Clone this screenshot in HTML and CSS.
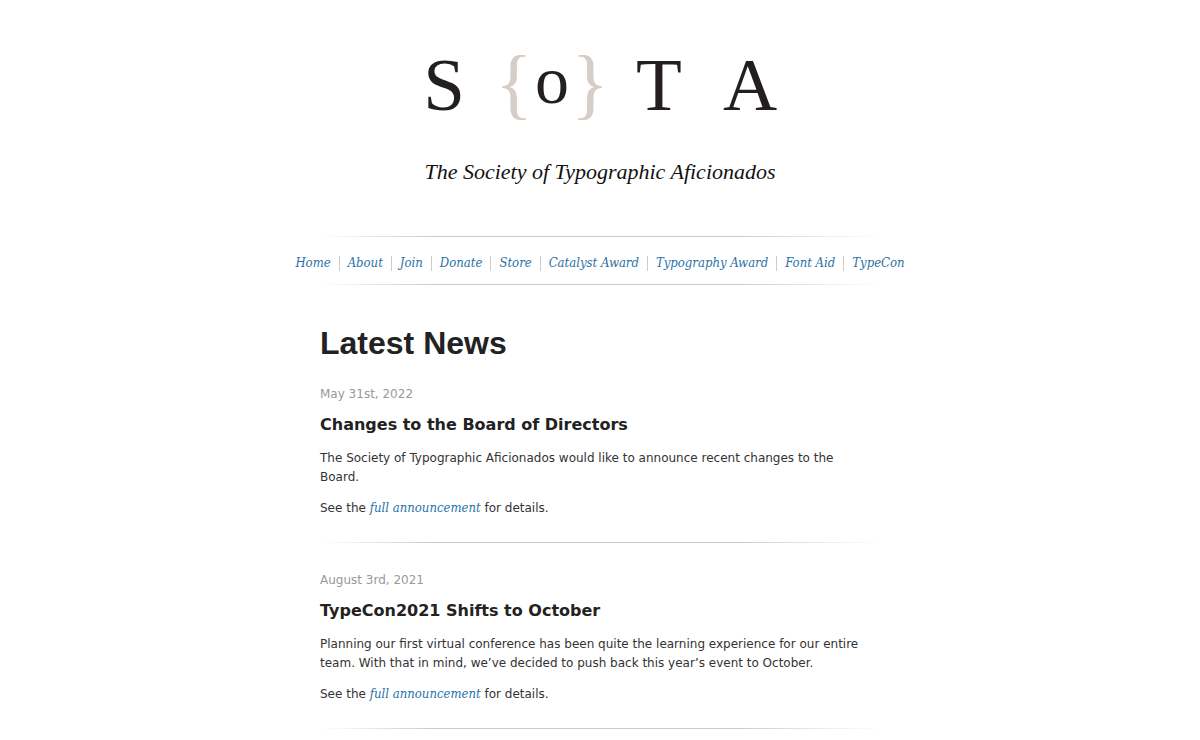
FILE: index.html
```html
<!DOCTYPE html>
<html lang="en">
<head>
<meta charset="utf-8">
<title>The Society of Typographic Aficionados</title>
<link rel="stylesheet" href="styles.css">
</head>
<body>
<header class="masthead">
  <svg class="logo" viewBox="0 0 400 150" width="400" height="150" role="img" aria-label="SoTA, The Society of Typographic Aficionados">
    <g class="logo-letters" text-anchor="middle">
      <text x="44" y="70">S</text>
      <text class="logo-brace" x="114" y="70">{</text>
      <text class="logo-o" x="152" y="63">o</text>
      <text class="logo-brace" x="190" y="70">}</text>
      <text x="259" y="70">T</text>
      <text x="350" y="70">A</text>
    </g>
    <text class="logo-tagline" x="200" y="139" text-anchor="middle">The Society of Typographic Aficionados</text>
  </svg>
</header>
<nav class="nav" aria-label="Main">
  <ul class="nav-list">
    <li><a href="#">Home</a></li>
    <li><a href="#">About</a></li>
    <li><a href="#">Join</a></li>
    <li><a href="#">Donate</a></li>
    <li><a href="#">Store</a></li>
    <li><a href="#">Catalyst Award</a></li>
    <li><a href="#">Typography Award</a></li>
    <li><a href="#">Font Aid</a></li>
    <li><a href="#">TypeCon</a></li>
  </ul>
</nav>
<main class="column">
  <h1 class="title">Latest News</h1>
  <article class="post">
    <p class="date">May 31st, 2022</p>
    <h2 class="post-title">Changes to the Board of Directors</h2>
    <p>The Society of Typographic Aficionados would like to announce recent changes to the Board.</p>
    <p>See the <a href="#">full announcement</a> for details.</p>
  </article>
  <article class="post">
    <p class="date">August 3rd, 2021</p>
    <h2 class="post-title">TypeCon2021 Shifts to October</h2>
    <p>Planning our first virtual conference has been quite the learning experience for our entire team. With that in mind, we’ve decided to push back this year’s event to October.</p>
    <p>See the <a href="#">full announcement</a> for details.</p>
  </article>
</main>
</body>
</html>
```
FILE: styles.css
```css
body {
  margin: 0;
  background: #fff;
  color: #333;
  font: 12px/19px Verdana, "DejaVu Sans", sans-serif;
}

a {
  color: #2a72a8;
  font-family: "DejaVu Serif Condensed", "DejaVu Serif", serif;
  font-size: 13px;
  font-style: italic;
  line-height: 18px;
  text-decoration: none;
}

a:hover {
  text-decoration: underline;
}

.masthead {
  display: flex;
  justify-content: center;
  padding: 40px 0 46px;
}

.logo {
  max-width: 100%;
}

.logo-letters {
  fill: #231f20;
  font-family: "Liberation Serif", serif;
  font-size: 75px;
}

.logo-letters .logo-o {
  font-size: 68px;
}

.logo-letters .logo-brace {
  fill: #d6cdc9;
  font-size: 78px;
}

.logo-tagline {
  fill: #111;
  font: italic 22px "Liberation Serif", serif;
}

.nav,
.post {
  background-image: linear-gradient(to right, #fff, #ccc 20%, #ccc 75%, #fff);
  background-position: bottom center;
  background-repeat: no-repeat;
  background-size: 560px 1px;
}

.nav {
  padding: 18px 0 13px;
  background-image:
    linear-gradient(to right, #fff, #ccc 20%, #ccc 75%, #fff),
    linear-gradient(to right, #fff, #ccc 20%, #ccc 75%, #fff);
  background-position: top center, bottom center;
}

.nav-list {
  display: flex;
  flex-wrap: wrap;
  justify-content: center;
  margin: 0;
  padding: 0;
  list-style: none;
  line-height: 18px;
}

.nav-list li {
  display: flex;
  align-items: center;
}

.nav-list li + li::before {
  content: "";
  height: 15px;
  margin: 0 8px;
  border-left: 1px solid #ccc;
}

.column {
  max-width: 560px;
  margin: 0 auto;
}

.title {
  margin: 38px 0 22px;
  color: #222;
  font: bold 32px/40px "Liberation Sans", Arial, sans-serif;
}

.post {
  margin-bottom: 28px;
  padding-bottom: 25px;
}

.post p {
  margin: 0 0 12px;
  padding-right: 12px;
}

.post p:last-child {
  margin-bottom: 0;
}

.post .date {
  margin-bottom: 8px;
  color: #999;
}

.post-title {
  margin: 0 0 12px;
  color: #222;
  font-size: 16px;
  line-height: 25px;
}
```
